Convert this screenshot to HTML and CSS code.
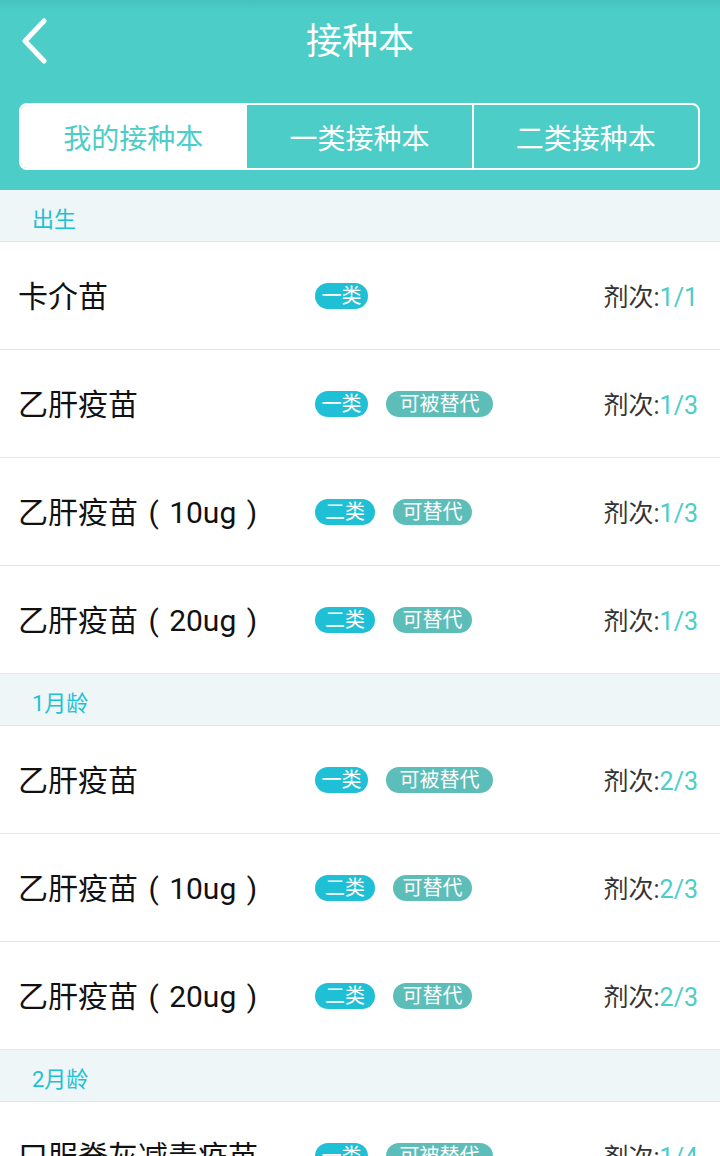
FILE: index.html
```html
<!DOCTYPE html>
<html lang="zh-CN">
<head>
<meta charset="utf-8">
<title>接种本</title>
<link rel="stylesheet" href="styles.css">
</head>
<body>
<header class="header">
  <div class="topbar">
    <span class="back">
      <svg width="30" height="46" viewBox="0 0 30 46"><polyline points="24,3 5,23 24,43" fill="none" stroke="#fff" stroke-width="5" stroke-linecap="round" stroke-linejoin="round"/></svg>
    </span>
    <h1 class="title">接种本</h1>
  </div>
  <nav class="segment">
    <span class="seg active">我的接种本</span>
    <span class="seg">一类接种本</span>
    <span class="seg">二类接种本</span>
  </nav>
</header>
<main class="list">
  <div class="section">出生</div>
  <div class="row">
    <span class="name">卡介苗</span>
    <span class="tags"><span class="tag t1">一类</span></span>
    <span class="dose">剂次:<em>1/1</em></span>
  </div>
  <div class="row">
    <span class="name">乙肝疫苗</span>
    <span class="tags"><span class="tag t1">一类</span><span class="tag sub4">可被替代</span></span>
    <span class="dose">剂次:<em>1/3</em></span>
  </div>
  <div class="row">
    <span class="name">乙肝疫苗 ( 10ug )</span>
    <span class="tags"><span class="tag t2">二类</span><span class="tag sub3">可替代</span></span>
    <span class="dose">剂次:<em>1/3</em></span>
  </div>
  <div class="row">
    <span class="name">乙肝疫苗 ( 20ug )</span>
    <span class="tags"><span class="tag t2">二类</span><span class="tag sub3">可替代</span></span>
    <span class="dose">剂次:<em>1/3</em></span>
  </div>
  <div class="section">1月龄</div>
  <div class="row">
    <span class="name">乙肝疫苗</span>
    <span class="tags"><span class="tag t1">一类</span><span class="tag sub4">可被替代</span></span>
    <span class="dose">剂次:<em>2/3</em></span>
  </div>
  <div class="row">
    <span class="name">乙肝疫苗 ( 10ug )</span>
    <span class="tags"><span class="tag t2">二类</span><span class="tag sub3">可替代</span></span>
    <span class="dose">剂次:<em>2/3</em></span>
  </div>
  <div class="row">
    <span class="name">乙肝疫苗 ( 20ug )</span>
    <span class="tags"><span class="tag t2">二类</span><span class="tag sub3">可替代</span></span>
    <span class="dose">剂次:<em>2/3</em></span>
  </div>
  <div class="section">2月龄</div>
  <div class="row">
    <span class="name">口服脊灰减毒疫苗</span>
    <span class="tags"><span class="tag t1">一类</span><span class="tag sub4">可被替代</span></span>
    <span class="dose">剂次:<em>1/4</em></span>
  </div>
</main>
</body>
</html>
```
FILE: styles.css
```css
* { box-sizing: border-box; }
html, body { margin: 0; padding: 0; }
body {
  width: 720px;
  height: 1156px;
  overflow: hidden;
  background: #fff;
  font-family: Roboto, "Noto Sans CJK SC", sans-serif;
}
.header {
  background: linear-gradient(#45c2bd 0, #4ccdc7 10px, #4ccdc7 100%);
  padding: 0 20px 20px 19px;
}
.topbar {
  height: 84px;
  display: flex;
  align-items: center;
  justify-content: center;
  position: relative;
}
.back {
  position: absolute;
  left: 1px;
  top: 18px;
  display: flex;
}
.title {
  margin: 0;
  color: #fff;
  font-size: 36px;
  font-weight: 400;
  line-height: 1;
  padding-left: 1px;
}
.segment {
  margin-top: 19px;
  height: 67px;
  display: flex;
  border: 2px solid #fff;
  border-radius: 8px;
  overflow: hidden;
}
.seg {
  flex: 1;
  display: flex;
  align-items: center;
  justify-content: center;
  color: #fff;
  font-size: 28px;
  border-left: 2px solid #fff;
}
.seg:first-child { border-left: none; }
.seg.active {
  background: #fff;
  color: #4ccdc7;
}
.section {
  height: 52px;
  background: #eef6f8;
  border-bottom: 1px solid #e3e6e7;
  color: #1ec0d4;
  font-size: 22px;
  display: flex;
  align-items: center;
  padding-left: 32px;
  padding-top: 2px;
}
.row {
  height: 108px;
  border-bottom: 1px solid #e6e6e6;
  display: flex;
  align-items: center;
  padding: 0 22px 0 18px;
}
.name {
  width: 297px;
  font-size: 30px;
  color: #111;
  white-space: pre;
  word-spacing: 3px;
  margin-bottom: 4px;
}
.tags {
  flex: 1;
  display: flex;
  gap: 18px;
}
.tag {
  height: 26px;
  border-radius: 13px;
  color: #fff;
  font-size: 20px;
  display: flex;
  align-items: center;
  justify-content: center;
  line-height: 1;
}
.t1 { background: #1fbfd6; width: 53px; }
.t2 { background: #1fbfd6; width: 60px; }
.sub4 { background: #5dbdb9; width: 107px; }
.sub3 { background: #5dbdb9; width: 79px; }
.dose {
  font-size: 25px;
  color: #333;
  white-space: nowrap;
  margin-bottom: 2px;
}
.dose em {
  font-style: normal;
  color: #4ccdc7;
}
```
